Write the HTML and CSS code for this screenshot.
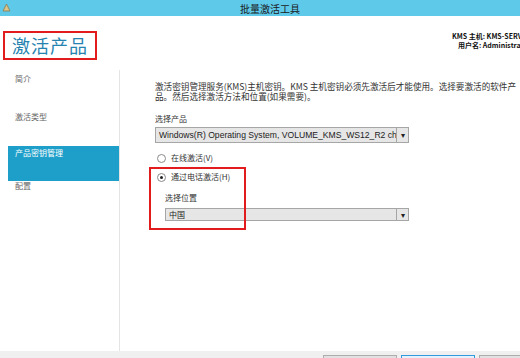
FILE: index.html
```html
<!DOCTYPE html>
<html lang="zh-CN">

<head>
  <meta charset="UTF-8">
  <title>批量激活工具</title>
  <link rel="stylesheet" href="styles.css">
</head>

<body>
  <div class="titlebar">
    <svg class="app-icon" width="9" height="9" viewBox="0 0 9 9">
      <path d="M1 8 L4.5 1 L8 8 Z" fill="#d9c48a" stroke="#8a7a50" stroke-width="0.8" />
    </svg>
    <span class="title">批量激活工具</span>
  </div>

  <div class="header">
    <h1 class="page-title">激活产品</h1>
    <div class="host-info">
      <div>KMS 主机: KMS-SERVER</div>
      <div>用户名: Administrator</div>
    </div>
  </div>

  <div class="main">
    <ul class="nav">
      <li>简介</li>
      <li>激活类型</li>
      <li class="active">产品密钥管理</li>
      <li>配置</li>
    </ul>

    <div class="content">
      <p class="intro">激活密钥管理服务(KMS)主机密钥。KMS 主机密钥必须先激活后才能使用。选择要激活的软件产品。然后选择激活方法和位置(如果需要)。</p>

      <div class="label">选择产品</div>
      <div class="select product-select">
        <span class="select-text">Windows(R) Operating System, VOLUME_KMS_WS12_R2 channel</span>
        <span class="select-arrow">▾</span>
      </div>

      <label class="radio-row">
        <span class="radio"></span>在线激活(V)
      </label>

      <div class="phone-group">
        <label class="radio-row">
          <span class="radio checked"></span>通过电话激活(H)
        </label>
        <div class="label sub-label">选择位置</div>
        <div class="select location-select">
          <span class="select-text">中国</span>
          <span class="select-arrow">▾</span>
        </div>
        <div class="highlight"></div>
      </div>
    </div>
  </div>

  <div class="footer">
    <button class="btn">&lt; 上一步(P)</button>
    <button class="btn primary">下一步(N) &gt;</button>
    <button class="btn">取消</button>
  </div>
</body>

</html>
```

FILE: styles.css
```css
body {
  margin: 0;
  width: 520px;
  height: 358px;
  overflow: hidden;
  background: #fff;
  font-family: "Noto Sans CJK SC", "Liberation Sans", sans-serif;
  color: #333;
}

.titlebar {
  height: 16px;
  background: #5fc9ea;
  position: relative;
  display: flex;
  justify-content: center;
  align-items: center;
}

.app-icon {
  position: absolute;
  left: 2px;
  top: 3px;
}

.title {
  font-size: 10px;
  color: #1a1a1a;
  margin-left: 20px;
}

.header {
  height: 54px;
  display: flex;
  justify-content: space-between;
  align-items: flex-start;
}

.page-title {
  margin: 15px 0 0 3px;
  padding: 0 7px;
  height: 25px;
  border: 2px solid #e21c1c;
  font-size: 18px;
  font-weight: normal;
  line-height: 24px;
  color: #2683b0;
  letter-spacing: 1px;
}

.host-info {
  margin-top: 16px;
  width: 68px;
  white-space: nowrap;
  overflow: hidden;
  font-size: 7px;
  font-weight: bold;
  line-height: 9px;
  color: #111;
  text-align: left;
}

.host-info div:last-child {
  padding-left: 6px;
}

.main {
  display: flex;
  height: 281px;
}

.nav {
  list-style: none;
  margin: 0;
  padding: 0;
  width: 119px;
  border-right: 1px solid #e4e4e4;
  flex-shrink: 0;
}

.nav li {
  height: 15px;
  margin-left: 8px;
  padding-left: 7px;
  font-size: 8px;
  line-height: 15px;
  color: #666;
}

.nav li:first-child {
  margin-top: 1px;
}

.nav li + li {
  margin-top: 23px;
}

.nav li.active {
  height: 35px;
  margin-top: 22px;
  background: #1e9fca;
  color: #fff;
  line-height: 13px;
}

.nav li.active + li {
  margin-top: -3px;
}

.content {
  padding: 11px 0 0 35px;
  width: 366px;
}

.intro {
  margin: 0;
  font-size: 8.6px;
  line-height: 10px;
  color: #333;
}

.label {
  margin-top: 13px;
  font-size: 8px;
  line-height: 10px;
  color: #333;
}

.select {
  display: flex;
  height: 14px;
  border: 1px solid #a6a6a6;
  background: #e6e6e6;
  box-sizing: border-box;
}

.select-text {
  flex: 1;
  padding-left: 3px;
  font-size: 8px;
  line-height: 12px;
  color: #222;
  white-space: nowrap;
  overflow: hidden;
}

.select-arrow {
  width: 11px;
  border-left: 1px solid #a6a6a6;
  font-size: 8px;
  line-height: 12px;
  text-align: center;
  color: #222;
}

.product-select {
  width: 254px;
  height: 16px;
  margin-top: 3px;
}

.product-select .select-text {
  font-family: "Liberation Sans", sans-serif;
  font-size: 8.6px;
  line-height: 14px;
}

.product-select .select-arrow {
  line-height: 14px;
}

.radio-row {
  display: flex;
  align-items: center;
  gap: 5px;
  margin-top: 10px;
  font-size: 8px;
  line-height: 10px;
  color: #333;
}

.radio {
  width: 7px;
  height: 7px;
  border: 1px solid #8a8a8a;
  border-radius: 50%;
  background: #fff;
  position: relative;
  margin-left: 2px;
}

.radio.checked::after {
  content: "";
  position: absolute;
  left: 2px;
  top: 2px;
  width: 3px;
  height: 3px;
  border-radius: 50%;
  background: #222;
}

.phone-group {
  position: relative;
  margin-top: 9px;
}

.phone-group .radio-row {
  margin-top: 0;
}

.sub-label {
  margin-top: 11px;
  margin-left: 10px;
}

.location-select {
  margin-top: 5px;
  margin-left: 10px;
  width: 244px;
  height: 13px;
}

.location-select .select-text,
.location-select .select-arrow {
  line-height: 11px;
}

.highlight {
  position: absolute;
  left: -6px;
  top: -5px;
  width: 93px;
  height: 59px;
  border: 2px solid #e21c1c;
  pointer-events: none;
}

.footer {
  height: 7px;
  background: #f0f0f0;
  display: flex;
  justify-content: flex-end;
  gap: 4px;
  padding-top: 4px;
  overflow: hidden;
}

.btn {
  width: 74px;
  height: 20px;
  padding: 0;
  border: 1px solid #adadad;
  background: #e1e1e1;
  font-family: "Noto Sans CJK SC", sans-serif;
  font-size: 8px;
}

.btn.primary {
  border-color: #3399dd;
  background: #e5f1fb;
}

.btn:last-child {
  margin-right: -33px;
}
```
